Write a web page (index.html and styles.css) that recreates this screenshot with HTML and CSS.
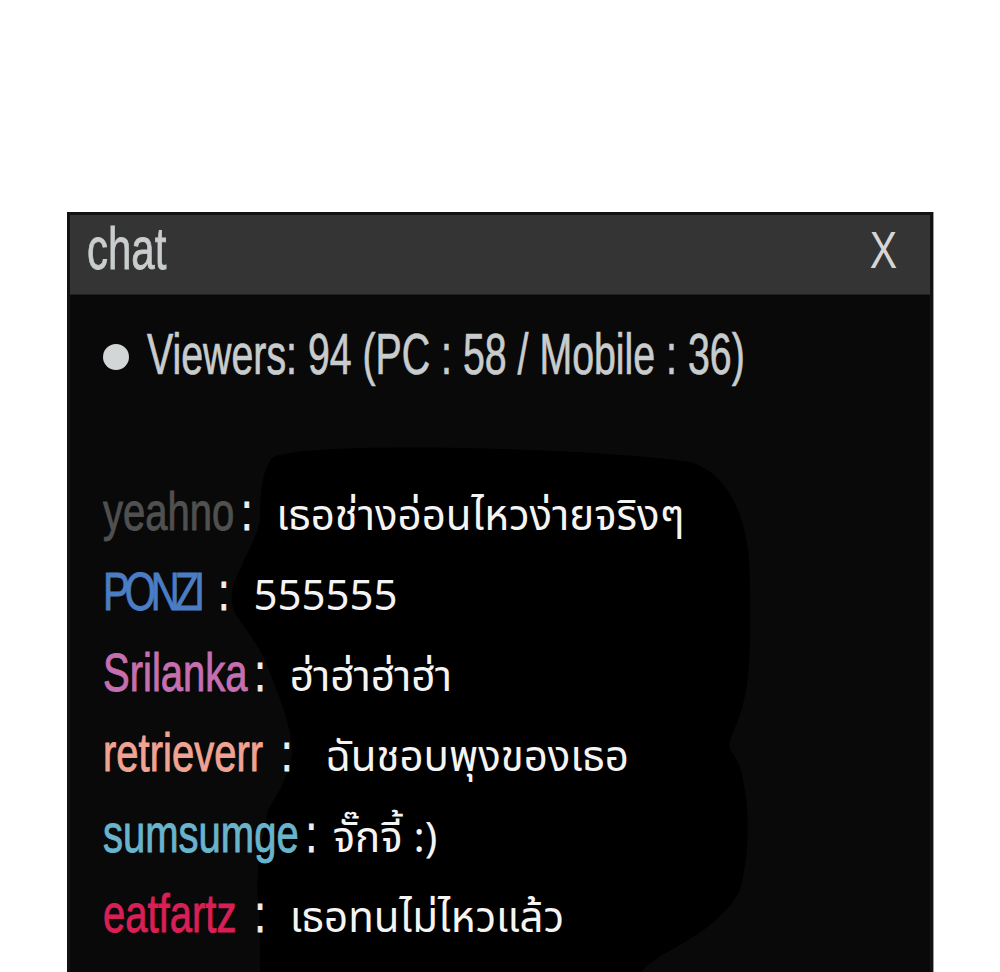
FILE: index.html
```html
<!DOCTYPE html>
<html lang="th">
<head>
<meta charset="utf-8">
<title>chat</title>
<link rel="stylesheet" href="styles.css">
</head>
<body>
<div class="panel">
  <div class="panel-head">
    <span class="title">chat</span>
    <span class="close">X</span>
  </div>
  <div class="panel-body">
    <svg class="shadow" viewBox="70 295 860 677" width="860" height="677" aria-hidden="true">
      <path d="M272 458 C300 440 600 448 690 462 C725 472 745 510 749 560 C752 620 750 680 744 700 C740 720 730 735 729 747 C733 755 740 762 742 775 C750 810 750 850 740 890 C725 920 690 940 662 955 C645 965 630 980 625 1000 L262 1000 C258 960 262 930 258 900 C255 870 262 840 268 810 C280 790 292 770 292 750 C290 720 280 700 265 660 C255 640 245 628 236 615 C228 600 232 585 240 570 C245 555 256 540 260 520 C260 495 262 470 272 458 Z" fill="#000"/>
    </svg>
    <div class="viewers">
      <span class="dot"></span>
      <span class="viewers-text">Viewers: 94 (PC : 58 / Mobile : 36)</span>
    </div>
    <div class="messages">
      <div class="row"><span class="name c-gray">yeahno</span><span class="colon">:</span><span class="msg">เธอช่างอ่อนไหวง่ายจริงๆ</span></div>
      <div class="row"><span class="name c-blue tight">PONZI</span><span class="colon">&nbsp;:</span><span class="msg">555555</span></div>
      <div class="row"><span class="name c-pink">Srilanka</span><span class="colon">:</span><span class="msg">ฮ่าฮ่าฮ่าฮ่า</span></div>
      <div class="row"><span class="name c-salmon">retrieverr</span><span class="colon">&nbsp;:</span><span class="msg wide">ฉันชอบพุงของเธอ</span></div>
      <div class="row"><span class="name c-sky">sumsumge</span><span class="colon">:</span><span class="msg narrow">จั๊กจี้ :)</span></div>
      <div class="row"><span class="name c-red">eatfartz</span><span class="colon">&nbsp;:</span><span class="msg">เธอทนไม่ไหวแล้ว</span></div>
      <div class="row"><span class="name c-light">Mina</span><span class="colon">&nbsp;:</span><span class="msg">ฮ่าๆ</span></div>
    </div>
  </div>
</div>
</body>
</html>
```
FILE: styles.css
```css
html, body {
  margin: 0;
  padding: 0;
  background: #ffffff;
  overflow: hidden;
}

.panel {
  margin: 212px 0 0 67px;
  width: 860px;
  border: 3px solid #121212;
  border-bottom: none;
  box-shadow: 1px 0 0 #9a9a9a;
  font-family: "Liberation Sans", Arial, sans-serif;
}

.panel-head {
  height: 80px;
  background: #343434;
  border-bottom: 1px solid #202020;
  display: flex;
  align-items: center;
  justify-content: space-between;
  padding: 0 33px 0 17px;
  box-sizing: border-box;
}

.title {
  display: inline-block;
  font-size: 42px;
  line-height: 1;
  color: #c9cdcd;
  -webkit-text-stroke: 0.6px #c9cdcd;
  transform: scaleY(1.43);
  transform-origin: 0 35.5px;
}

.close {
  display: inline-block;
  font-size: 41px;
  line-height: 1;
  color: #d6d6d6;
  transform: scaleY(1.25);
  transform-origin: 0 34.7px;
}

.panel-body {
  position: relative;
  height: 677px;
  overflow: hidden;
  background: #090909;
  padding: 42px 0 0 33px;
  box-sizing: border-box;
}

.shadow {
  position: absolute;
  left: 0;
  top: 0;
}

.viewers,
.messages {
  position: relative;
}

.viewers {
  display: flex;
  align-items: center;
  gap: 18px;
  height: 48px;
}

.dot {
  width: 26px;
  height: 26px;
  border-radius: 50%;
  background: #d3d6d6;
  margin-top: -8px;
}

.viewers-text {
  display: inline-block;
  font-size: 39.3px;
  line-height: 1;
  color: #c8cccc;
  -webkit-text-stroke: 0.5px #c8cccc;
  transform: scaleY(1.46);
  transform-origin: 0 33.3px;
  white-space: nowrap;
}

.messages {
  margin-top: 111px;
}

.row {
  display: flex;
  align-items: baseline;
  height: 80.4px;
  white-space: nowrap;
}

.name,
.colon {
  display: inline-block;
  font-size: 40px;
  line-height: 1;
  -webkit-text-stroke: 0.7px currentColor;
  transform: scaleY(1.34);
  transform-origin: 0 33.9px;
}

.colon {
  color: #efefef;
  margin-left: 7px;
}

.tight {
  letter-spacing: -5px;
}

.msg {
  font-family: "Noto Sans Thai", "Noto Sans Thai UI", "Loma", "Garuda", "Noto Sans", sans-serif;
  font-size: 42px;
  line-height: 1;
  color: #f4f4f4;
  margin-left: 24px;
}

.msg.wide {
  margin-left: 33px;
}

.msg.narrow {
  margin-left: 16px;
}

.c-gray { color: #505050; }
.c-blue { color: #4a7dc4; }
.c-pink { color: #c56fb0; }
.c-salmon { color: #f0a393; }
.c-sky { color: #69b4cd; }
.c-red { color: #d81f56; }
.c-light { color: #c8c8c8; }
```
